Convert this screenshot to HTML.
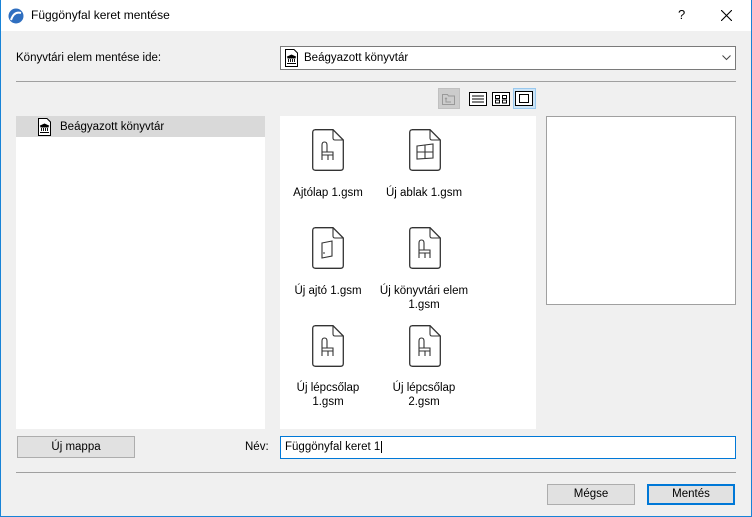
<!DOCTYPE html>
<html><head><meta charset="utf-8"><style>
*{margin:0;padding:0;box-sizing:border-box}
body{width:752px;height:517px;background:#f0f0f0;font-family:"Liberation Sans",sans-serif;font-size:11.5px;color:#000;position:relative;overflow:hidden}
.a{position:absolute}
.win{position:absolute;left:0;top:0;width:752px;height:517px;border:1px solid #1883d7;border-top:none}
.title{left:0;top:0;width:752px;height:31px;background:#fff}
.file{position:absolute;width:32px;height:42px}
.lbl{position:absolute;width:110px;text-align:center;line-height:14px}
.btn{position:absolute;background:#e1e1e1;border:1px solid #adadad;text-align:center;line-height:19px}
</style></head><body>
<div class="a title"></div>
<svg class="a" style="left:8px;top:8px" width="16" height="16" viewBox="0 0 16 16"><circle cx="8" cy="8" r="7.5" fill="#2f6fc0"/><path d="M3 12 Q6 3 13 5" stroke="#fff" stroke-width="2" fill="none"/></svg>
<div class="a" style="left:31px;top:8px;font-size:12px">Függönyfal keret mentése</div>
<div class="a" style="left:678px;top:7px;font-size:13px">?</div>
<svg class="a" style="left:721px;top:10px" width="11" height="11"><path d="M0 0L11 11M11 0L0 11" stroke="#000" stroke-width="1.1"/></svg>
<div class="win"></div>

<div class="a" style="left:16px;top:52px">Könyvtári elem mentése ide:</div>
<div class="a" style="left:280px;top:46px;width:456px;height:24px;background:#fff;border:1px solid #7a7a7a"></div>
<svg class="a" style="left:285px;top:49px" width="13" height="18" viewBox="0 0 13 18"><path d="M.5 .5H9L12.5 4V17.5H.5Z" fill="#fff" stroke="#000"/><path d="M2 8L6.5 6L11 8ZM2.5 9h8M3.5 10v3M5.5 10v3M7.5 10v3M9.5 10v3M2 14.5h9" stroke="#000" fill="#000" stroke-width=".9"/></svg>
<div class="a" style="left:304px;top:52px">Beágyazott könyvtár</div>
<svg class="a" style="left:722px;top:55px" width="9" height="6"><path d="M.5 .5L4.5 4.5L8.5 .5" stroke="#444" fill="none"/></svg>
<div class="a" style="left:16px;top:81px;width:720px;height:1px;background:#a0a0a0"></div>

<div class="a" style="left:438px;top:88px;width:22px;height:21px;background:#ccc;border:1px solid #c0c0c0"></div>
<svg class="a" style="left:442px;top:93px" width="14" height="12"><path d="M.5 1.5h5l1 1.5h6v8.5H.5Z" fill="none" stroke="#999"/><path d="M4 5v4h5M3 6l1-1 1 1" stroke="#999" fill="none"/></svg>
<svg class="a" style="left:469px;top:92px" width="18" height="14"><rect x=".5" y=".5" width="17" height="13" fill="#fff" stroke="#000"/><path d="M3 4h12M3 7h12M3 10h12" stroke="#000"/></svg>
<svg class="a" style="left:492px;top:92px" width="18" height="14"><rect x=".5" y=".5" width="17" height="13" fill="#fff" stroke="#000"/><rect x="3.5" y="3.5" width="4" height="3" fill="none" stroke="#000"/><rect x="10.5" y="3.5" width="4" height="3" fill="none" stroke="#000"/><rect x="3.5" y="8" width="4" height="3" fill="none" stroke="#000"/><rect x="10.5" y="8" width="4" height="3" fill="none" stroke="#000"/></svg>
<div class="a" style="left:513px;top:88px;width:23px;height:21px;background:#cce4f7;border:1px solid #99c9ef"></div>
<svg class="a" style="left:515px;top:91px" width="18" height="15"><rect x=".5" y=".5" width="17" height="14" fill="#fff" stroke="#000"/><rect x="4.5" y="3.5" width="9" height="8" fill="none" stroke="#000"/></svg>

<div class="a" style="left:16px;top:116px;width:249px;height:313px;background:#fff"></div>
<div class="a" style="left:16px;top:116px;width:249px;height:21px;background:#d9d9d9"></div>
<svg class="a" style="left:38px;top:118px" width="13" height="18" viewBox="0 0 13 18"><path d="M.5 .5H9L12.5 4V17.5H.5Z" fill="#fff" stroke="#000"/><path d="M2 8L6.5 6L11 8ZM2.5 9h8M3.5 10v3M5.5 10v3M7.5 10v3M9.5 10v3M2 14.5h9" stroke="#000" fill="#000" stroke-width=".9"/></svg>
<div class="a" style="left:60px;top:121px">Beágyazott könyvtár</div>

<div class="a" style="left:280px;top:116px;width:256px;height:313px;background:#fff"></div>
<div class="a" style="left:546px;top:116px;width:190px;height:189px;background:#fff;border:1px solid #a0a0a0"></div>

<svg width="0" height="0" style="position:absolute"><defs>
<g id="f"><path d="M3 .7H21L31.3 11V38.5Q31.3 41.3 28.5 41.3H3.5Q.7 41.3 .7 38.5V3.5Q.7 .7 3.5 .7Z" fill="#fff" stroke="#333" stroke-width="1.3"/><path d="M21 .7V9Q21 11 23 11H31.3" fill="none" stroke="#333" stroke-width="1.1"/></g>
<g id="c"><path d="M10 31V16Q10 13 12.5 13Q15 13 15 16V23H21V31M10 23H15M10 26H21M16 26V31" fill="none" stroke="#333" stroke-width="1.1"/></g>
</defs></svg>
<svg class="file" style="left:312px;top:129px"><use href="#f"/><use href="#c"/></svg>
<svg class="file" style="left:409px;top:129px"><use href="#f"/><path d="M8 17L24 15V29L8 30ZM8 23H24M16 16V29.5" fill="none" stroke="#333" stroke-width="1.1"/></svg>
<svg class="file" style="left:312px;top:227px"><use href="#f"/><path d="M10 16L20 14V29L10 31Z" fill="none" stroke="#333" stroke-width="1.1"/><path d="M12 25v2" stroke="#333"/></svg>
<svg class="file" style="left:409px;top:227px"><use href="#f"/><use href="#c"/></svg>
<svg class="file" style="left:312px;top:325px"><use href="#f"/><use href="#c"/></svg>
<svg class="file" style="left:409px;top:325px"><use href="#f"/><use href="#c"/></svg>

<div class="lbl" style="left:273px;top:186px">Ajtólap 1.gsm</div>
<div class="lbl" style="left:369px;top:186px">Új ablak 1.gsm</div>
<div class="lbl" style="left:273px;top:284px">Új ajtó 1.gsm</div>
<div class="lbl" style="left:369px;top:284px">Új könyvtári elem<br>1.gsm</div>
<div class="lbl" style="left:273px;top:381px">Új lépcsőlap<br>1.gsm</div>
<div class="lbl" style="left:369px;top:381px">Új lépcsőlap<br>2.gsm</div>

<div class="btn" style="left:17px;top:436px;width:118px;height:22px;line-height:20px">Új mappa</div>
<div class="a" style="left:245px;top:441px">Név:</div>
<div class="a" style="left:280px;top:436px;width:456px;height:23px;background:#fff;border:1px solid #0078d7"></div>
<div class="a" style="left:285px;top:441px">Függönyfal keret 1<span style="border-left:1px solid #000;margin-left:1px"></span></div>
<div class="a" style="left:16px;top:472px;width:720px;height:1px;background:#a0a0a0"></div>
<div class="btn" style="left:547px;top:484px;width:88px;height:21px">Mégse</div>
<div class="btn" style="left:647px;top:484px;width:88px;height:21px;border:2px solid #0078d7;line-height:17px">Mentés</div>
</body></html>
